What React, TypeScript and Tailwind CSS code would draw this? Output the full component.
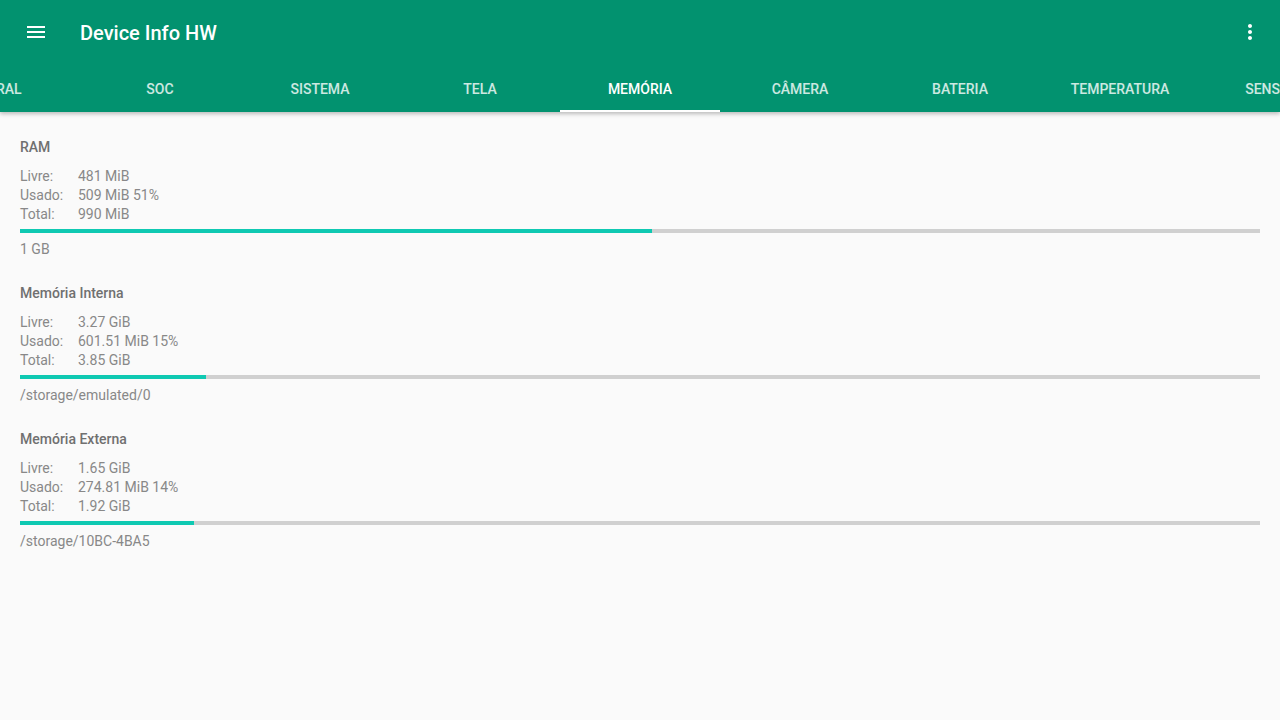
const tabs = ["GERAL", "SOC", "SISTEMA", "TELA", "MEMÓRIA", "CÂMERA", "BATERIA", "TEMPERATURA", "SENSORES"];

const sections = [
  { title: "RAM", free: "481 MiB", used: "509 MiB 51%", total: "990 MiB", pct: 51, foot: "1 GB" },
  { title: "Memória Interna", free: "3.27 GiB", used: "601.51 MiB 15%", total: "3.85 GiB", pct: 15, foot: "/storage/emulated/0" },
  { title: "Memória Externa", free: "1.65 GiB", used: "274.81 MiB 14%", total: "1.92 GiB", pct: 14, foot: "/storage/10BC-4BA5" },
];

const Row = ({ label, value }: { label: string; value: string }) => (
  <div className="flex h-[19px] items-center">
    <span className="w-[58px]">{label}</span>
    <span>{value}</span>
  </div>
);

const App = () => {
  return (
    <div className="h-[720px] w-[1280px] overflow-hidden bg-[#fafafa]" style={{ fontFamily: "Roboto, sans-serif" }}>
      <div className="relative z-10 bg-[#02926f] text-white shadow-[0_2px_4px_rgba(0,0,0,0.25)]">
        <div className="flex h-16 items-center pl-6 pr-[18px]">
          <svg viewBox="0 0 24 24" className="h-6 w-6" fill="white">
            <path d="M3 18h18v-2H3v2zm0-5h18v-2H3v2zm0-7v2h18V6H3z" />
          </svg>
          <h1 className="ml-8 pt-[2px] text-[20px] font-medium">Device Info HW</h1>
          <svg viewBox="0 0 24 24" className="ml-auto h-6 w-6" fill="white">
            <path d="M12 8c1.1 0 2-.9 2-2s-.9-2-2-2-2 .9-2 2 .9 2 2 2zm0 2c-1.1 0-2 .9-2 2s.9 2 2 2 2-.9 2-2-.9-2-2-2zm0 6c-1.1 0-2 .9-2 2s.9 2 2 2 2-.9 2-2-.9-2-2-2z" />
          </svg>
        </div>
        <div className="flex h-12 -ml-20">
          {tabs.map((t) => (
            <div
              key={t}
              className={`relative flex w-40 shrink-0 items-center justify-center pt-[2px] text-[14px] font-medium ${
                t === "MEMÓRIA" ? "text-white" : "text-white/80"
              }`}
            >
              {t}
              {t === "MEMÓRIA" && <div className="absolute bottom-0 left-0 right-0 h-[2px] bg-white" />}
            </div>
          ))}
        </div>
      </div>

      <div className="px-5 pt-[25px]">
        {sections.map((s) => (
          <div key={s.title} className="mb-[24px]">
            <div className="mb-[10px] h-5 text-[14px] font-medium leading-5 text-[#707070]">{s.title}</div>
            <div className="text-[14px] text-[#888888]">
              <Row label="Livre:" value={s.free} />
              <Row label="Usado:" value={s.used} />
              <Row label="Total:" value={s.total} />
            </div>
            <div className="mt-[5px] flex h-1 w-full bg-[#d0d0d0]">
              <div className="h-1 bg-[#0fc9b2]" style={{ width: `${s.pct}%` }} />
            </div>
            <div className="mt-[6px] h-5 text-[14px] leading-5 text-[#888888]">{s.foot}</div>
          </div>
        ))}
      </div>
    </div>
  );
};

export default App;
